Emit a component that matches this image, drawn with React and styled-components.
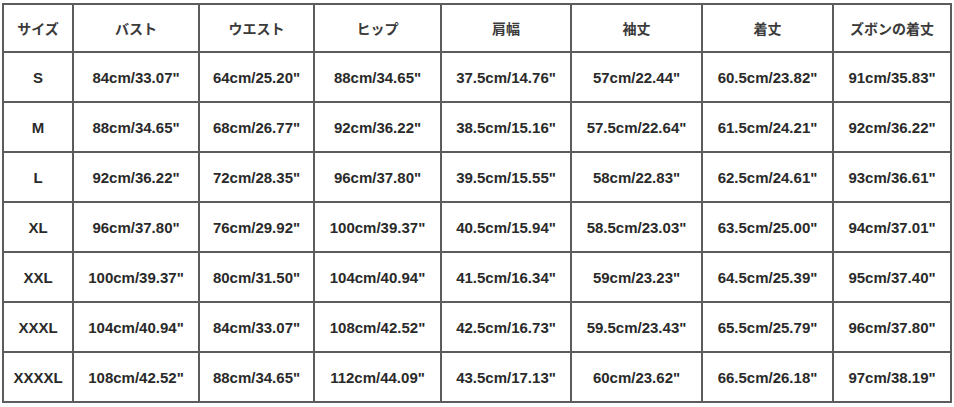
import styled, { createGlobalStyle } from "styled-components";

const GlobalStyle = createGlobalStyle`
  html, body {
    margin: 0;
    padding: 0;
    background: #fff;
  }
  body {
    font-family: "Liberation Sans", Arial, "Noto Sans CJK JP", sans-serif;
  }
`;

const Page = styled.div`
  padding: 3px 0 0 2px;
`;

const Table = styled.table`
  border-collapse: collapse;
  table-layout: fixed;
  width: 948px;
`;

const Cell = styled.td`
  height: 48px;
  padding: 0;
  border: 2px solid #5c5c5c;
  text-align: center;
  vertical-align: middle;
  color: #2a2a2a;
  font-family: "Liberation Sans", Arial, sans-serif;
  font-weight: bold;
  font-size: 15px;
  white-space: nowrap;
`;

const HeadCell = styled(Cell).attrs({ as: "th" })`
  height: 46px;
  font-family: "Noto Sans CJK JP", "Liberation Sans", sans-serif;
  font-weight: bold;
  font-size: 14px;
  color: #3a3a3a;
`;

const widths = [70, 126, 115, 127, 130, 131, 131, 118];

const headers = ["サイズ", "バスト", "ウエスト", "ヒップ", "肩幅", "袖丈", "着丈", "ズボンの着丈"];

const rows = [
  ["S", "84cm/33.07''", "64cm/25.20''", "88cm/34.65''", "37.5cm/14.76''", "57cm/22.44''", "60.5cm/23.82''", "91cm/35.83''"],
  ["M", "88cm/34.65''", "68cm/26.77''", "92cm/36.22''", "38.5cm/15.16''", "57.5cm/22.64''", "61.5cm/24.21''", "92cm/36.22''"],
  ["L", "92cm/36.22''", "72cm/28.35''", "96cm/37.80''", "39.5cm/15.55''", "58cm/22.83''", "62.5cm/24.61''", "93cm/36.61''"],
  ["XL", "96cm/37.80''", "76cm/29.92''", "100cm/39.37''", "40.5cm/15.94''", "58.5cm/23.03''", "63.5cm/25.00''", "94cm/37.01''"],
  ["XXL", "100cm/39.37''", "80cm/31.50''", "104cm/40.94''", "41.5cm/16.34''", "59cm/23.23''", "64.5cm/25.39''", "95cm/37.40''"],
  ["XXXL", "104cm/40.94''", "84cm/33.07''", "108cm/42.52''", "42.5cm/16.73''", "59.5cm/23.43''", "65.5cm/25.79''", "96cm/37.80''"],
  ["XXXXL", "108cm/42.52''", "88cm/34.65''", "112cm/44.09''", "43.5cm/17.13''", "60cm/23.62''", "66.5cm/26.18''", "97cm/38.19''"],
];

export default function App() {
  return (
    <Page>
      <GlobalStyle />
      <Table>
        <colgroup>
          {widths.map((w, i) => (
            <col key={i} style={{ width: w }} />
          ))}
        </colgroup>
        <thead>
          <tr>
            {headers.map((h) => (
              <HeadCell key={h}>{h}</HeadCell>
            ))}
          </tr>
        </thead>
        <tbody>
          {rows.map((r) => (
            <tr key={r[0]}>
              {r.map((v, i) => (
                <Cell key={i}>{v.replace("''", '"')}</Cell>
              ))}
            </tr>
          ))}
        </tbody>
      </Table>
    </Page>
  );
}
